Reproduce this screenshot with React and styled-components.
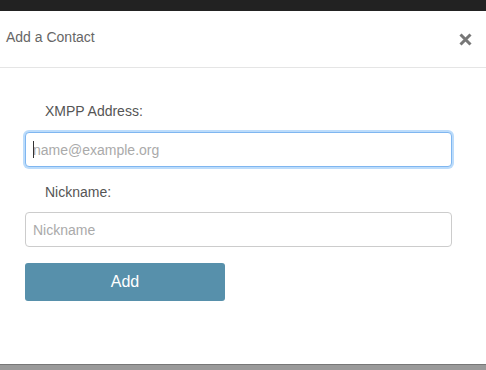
import React from 'react';
import styled, { createGlobalStyle } from 'styled-components';

const GlobalStyle = createGlobalStyle`
  html, body {
    margin: 0;
    padding: 0;
    background: #9a9a9a;
    font-family: 'Liberation Sans', Arial, sans-serif;
  }
`;

const Page = styled.div`
  display: flex;
  flex-direction: column;
  height: 370px;
`;

const TopBar = styled.div`
  height: 11px;
  background: #222;
`;

const Modal = styled.div`
  height: 353px;
  background: #fff;
  display: flex;
  flex-direction: column;
`;

const Header = styled.div`
  height: 56px;
  border-bottom: 1px solid #e5e5e5;
  display: flex;
  align-items: center;
  justify-content: space-between;
  padding: 0 14px 0 6px;
`;

const Title = styled.h4`
  margin: 0;
  font-size: 14px;
  font-weight: normal;
  color: #666;
  position: relative;
  top: -2px;
`;

const CloseButton = styled.button`
  border: 0;
  background: none;
  padding: 0;
  width: 14px;
  height: 14px;
  display: flex;
  align-items: center;
  justify-content: center;
  cursor: pointer;
`;

const Body = styled.form`
  padding: 33px 34px 0 25px;
  display: flex;
  flex-direction: column;
`;

const Label = styled.label`
  display: block;
  font-size: 14px;
  line-height: 20px;
  color: #555;
  padding-left: 20px;
  margin-bottom: ${(p) => p.$gap}px;
`;

const Input = styled.input`
  box-sizing: border-box;
  width: 427px;
  height: 35px;
  padding: 0 7px;
  font-family: 'Liberation Sans', Arial, sans-serif;
  font-size: 14px;
  color: #555;
  background: #fff;
  border: 1px solid ${(p) => (p.$focused ? '#7fb6f0' : '#ccc')};
  border-radius: 4px;
  outline: none;
  box-shadow: ${(p) => (p.$focused ? '0 0 0 2px #bcdcfb' : 'none')};
  margin-bottom: ${(p) => p.$gap}px;
  &::placeholder {
    color: #aaa;
  }
`;

const Caret = styled.span`
  position: absolute;
  left: 8px;
  top: 9px;
  width: 1px;
  height: 17px;
  background: #333;
`;

const Field = styled.div`
  position: relative;
  width: 427px;
`;

const SubmitButton = styled.button`
  width: 200px;
  height: 38px;
  border: 0;
  border-radius: 3px;
  background: #5790ab;
  color: #fff;
  font-family: 'Liberation Sans', Arial, sans-serif;
  font-size: 16px;
  cursor: pointer;
`;

const Footer = styled.div`
  flex: 1;
  border-top: 1px solid #777;
  background: #9a9a9a;
`;

const CloseIcon = () => (
  <svg width="13" height="13" viewBox="0 0 13 13">
    <path d="M1.5 1.5 L11.5 11.5 M11.5 1.5 L1.5 11.5" stroke="#777" strokeWidth="3" />
  </svg>
);

export default function App() {
  return (
    <Page>
      <GlobalStyle />
      <TopBar />
      <Modal>
        <Header>
          <Title>Add a Contact</Title>
          <CloseButton type="button" aria-label="Close">
            <CloseIcon />
          </CloseButton>
        </Header>
        <Body onSubmit={(e) => e.preventDefault()}>
          <Label $gap={11}>XMPP Address:</Label>
          <Field>
            <Input $focused $gap={15} placeholder="name@example.org" />
            <Caret />
          </Field>
          <Label $gap={10}>Nickname:</Label>
          <Input $gap={16} placeholder="Nickname" />
          <SubmitButton type="submit">Add</SubmitButton>
        </Body>
      </Modal>
      <Footer />
    </Page>
  );
}
